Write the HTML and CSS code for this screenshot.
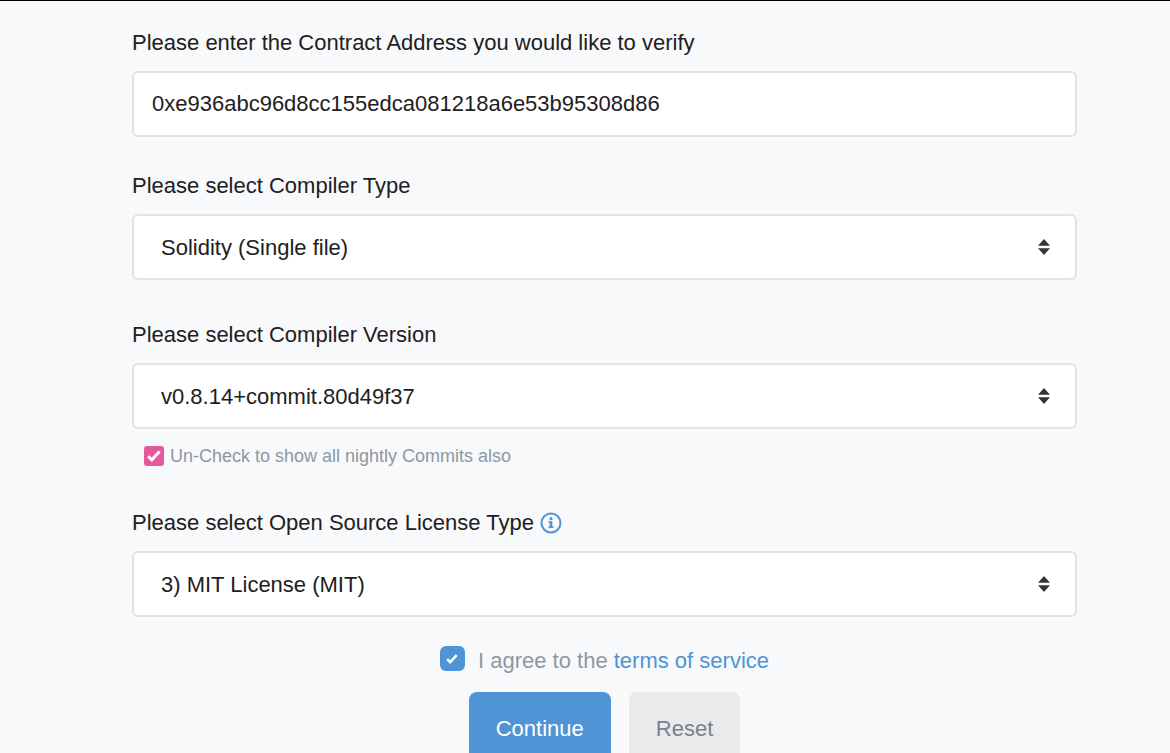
FILE: index.html
```html
<!DOCTYPE html>
<html lang="en">
<head>
    <meta charset="UTF-8">
    <meta name="viewport" content="width=device-width, initial-scale=1.0">
    <title>Verify Contract</title>
    <link rel="stylesheet" href="styles.css">
</head>
<body>
    <form class="container" id="verify-form">
        <div class="form-group">
            <label for="address">Please enter the Contract Address you would like to verify</label>
            <input type="text" class="form-control" id="address" name="address" value="0xe936abc96d8cc155edca081218a6e53b95308d86" spellcheck="false" required>
        </div>
        <div class="form-group form-group-wide">
            <label for="compiler-type">Please select Compiler Type</label>
            <select class="form-control custom-select" id="compiler-type" name="compilerType">
                <option>Solidity (Single file)</option>
            </select>
        </div>
        <div class="form-group form-group-wide">
            <label for="compiler-version">Please select Compiler Version</label>
            <select class="form-control custom-select" id="compiler-version" name="compilerVersion">
                <option>v0.8.14+commit.80d49f37</option>
            </select>
            <div class="nightly">
                <input type="checkbox" class="checkbox checkbox-pink" id="nightly" checked>
                <label for="nightly">Un-Check to show all nightly Commits also</label>
            </div>
        </div>
        <div class="form-group">
            <div class="label-row">
                <label for="license">Please select Open Source License Type</label>
                <svg class="info-icon" viewBox="0 0 22 22" role="img" aria-label="License info">
                    <circle cx="11" cy="11" r="9.5" fill="none" stroke="currentColor" stroke-width="2"/>
                    <circle cx="11" cy="6.7" r="1.6" fill="currentColor"/>
                    <path d="M8.6 9.3h3.7v5h1.1v1.7H8.6v-1.7h1.1V11H8.6z" fill="currentColor"/>
                </svg>
            </div>
            <select class="form-control custom-select" id="license" name="license">
                <option>3) MIT License (MIT)</option>
            </select>
        </div>
        <div class="terms">
            <input type="checkbox" class="checkbox checkbox-blue" id="terms" checked>
            <label for="terms">I agree to the <a href="#terms">terms of service</a></label>
        </div>
        <div class="buttons">
            <button type="submit" class="btn btn-primary">Continue</button>
            <button type="reset" class="btn btn-secondary">Reset</button>
        </div>
    </form>
</body>
</html>
```
FILE: styles.css
```css
* {
    box-sizing: border-box;
}
body {
    margin: 0;
    border-top: 1px solid #000000;
    background-color: #f8f9fb;
    color: #1e2022;
    font-family: "Liberation Sans", Arial, sans-serif;
    font-size: 22px;
    line-height: 30px;
}
.container {
    margin: 0 93px 0 132px;
    padding-top: 27px;
}
.form-group {
    margin-bottom: 34px;
}
.form-group-wide {
    margin-bottom: 40px;
}
.form-group > label {
    display: block;
}
.form-control {
    display: block;
    width: 100%;
    height: 66px;
    margin-top: 13px;
    padding: 0 18px;
    border: 2px solid #dfe2e7;
    border-radius: 6px;
    background-color: #ffffff;
    color: #1e2022;
    font-family: inherit;
    font-size: 22px;
}
.custom-select {
    appearance: none;
    padding: 0 27px;
    background-image: url("data:image/svg+xml,%3Csvg xmlns='http://www.w3.org/2000/svg' viewBox='0 0 12 16'%3E%3Cpath fill='%23333638' d='M0 6.8L6 0l6 6.8zM0 9.2h12L6 16z'/%3E%3C/svg%3E");
    background-repeat: no-repeat;
    background-position: right 25px center;
    background-size: 12px 16px;
}
.nightly {
    display: flex;
    align-items: center;
    margin: 15px 0 0 12px;
    color: #8c98a4;
    font-size: 18px;
    line-height: 24px;
}
.checkbox {
    appearance: none;
    flex: none;
    margin: 0;
    background-repeat: no-repeat;
    background-position: center;
    background-image: url("data:image/svg+xml,%3Csvg xmlns='http://www.w3.org/2000/svg' viewBox='0 0 14 12'%3E%3Cpath fill='none' stroke='white' stroke-width='3' d='M1.2 6.2l3.6 3.6L12.6 1.4'/%3E%3C/svg%3E");
}
.checkbox-pink {
    width: 20px;
    height: 20px;
    margin-right: 6px;
    border-radius: 3px;
    background-color: #e4599b;
    background-size: 14px 12px;
}
.checkbox-blue {
    width: 25px;
    height: 25px;
    margin-right: 13px;
    border-radius: 6px;
    background-color: #4f94d4;
    background-size: 12px 10px;
}
.label-row {
    display: flex;
    align-items: center;
}
.info-icon {
    width: 22px;
    height: 22px;
    margin-left: 6px;
    color: #4f94d4;
}
.terms {
    display: flex;
    align-items: flex-start;
    justify-content: center;
    margin-top: -5px;
    color: #8c98a4;
}
.terms a {
    color: #4f94d4;
    text-decoration: none;
}
.buttons {
    display: flex;
    justify-content: center;
    gap: 18px;
    margin-top: 16px;
}
.btn {
    height: 74px;
    padding: 0 27px;
    border: none;
    border-radius: 8px;
    font-family: inherit;
    font-size: 22px;
    cursor: pointer;
}
.btn-primary {
    background: #4f94d4;
    color: #ffffff;
}
.btn-secondary {
    background: #e9eaec;
    color: #77838f;
}
```
